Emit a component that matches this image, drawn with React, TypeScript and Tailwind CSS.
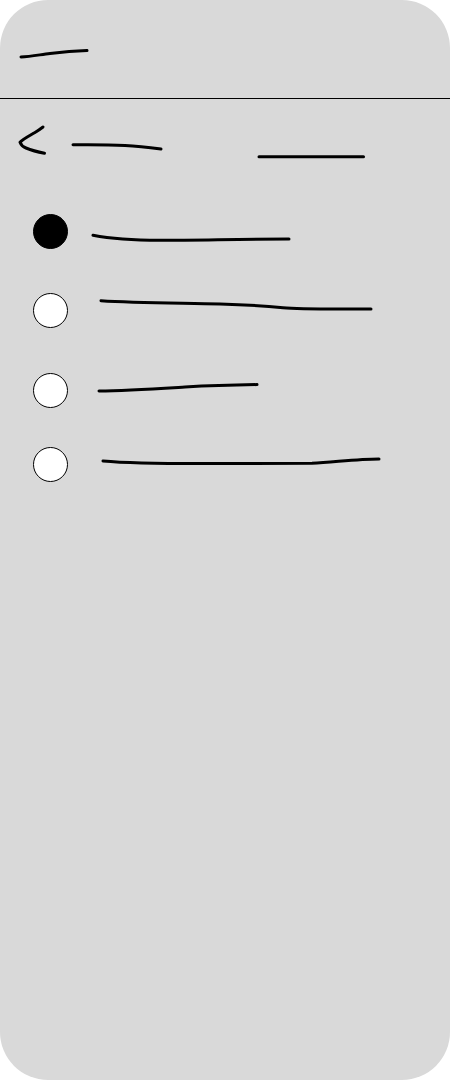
type TRadioRowProps = {
  checked?: boolean
  top: string
  viewBox: string
  line: string
}

const strokeProps = {
  fill: 'none',
  stroke: '#000',
  strokeWidth: 3,
  strokeLinecap: 'round' as const,
  strokeLinejoin: 'round' as const,
}

const RadioRow = (props: TRadioRowProps) => {
  const { checked, top, viewBox, line } = props

  return (
    <div className={`flex items-start ${top}`}>
      <div
        className={`w-[35px] h-[35px] shrink-0 rounded-full border border-black ${
          checked ? 'bg-black' : 'bg-white'
        }`}
      />
      <svg width="340" height="35" viewBox={viewBox} className="block">
        <path d={line} {...strokeProps} />
      </svg>
    </div>
  )
}

const App = () => {
  return (
    <div className="w-[450px] h-[1080px] bg-[#d9d9d9] rounded-[48px] overflow-hidden">
      <div className="h-[99px] border-b border-black">
        <svg width="100" height="98" viewBox="0 0 100 98" className="block">
          <path d="M21 57C31 56.5 41 54.5 50 53.5C63 52 75 51 87 50.5" {...strokeProps} />
        </svg>
      </div>

      <div className="flex h-[70px]">
        <svg width="450" height="70" viewBox="0 99 450 70" className="block">
          <path d="M43 127C38.5 130.5 36.5 131.5 33.5 133.3C28 136.5 23 139 20 142.3C21 145 23 146.8 26 148C32 150.5 38 152 44.5 153.3" {...strokeProps} />
          <path d="M73 144.7C95 144.5 110 144.6 125 145.4C138 146 150 147.5 161 149" {...strokeProps} />
          <path d="M259 156.8H363.5" {...strokeProps} />
        </svg>
      </div>

      <div className="pl-[33px]">
        <RadioRow
          checked
          top="mt-[45px]"
          viewBox="68 214 340 35"
          line="M93 235.3C108 238.2 125 240.3 160 240.3C200 240.3 240 239 289 239"
        />
        <RadioRow
          top="mt-[44px]"
          viewBox="68 293 340 35"
          line="M101 300.7C135 303 180 303 220 304C245 304.7 265 306 283 307.8C300 309.5 335 309 371 309"
        />
        <RadioRow
          top="mt-[45px]"
          viewBox="68 373 340 35"
          line="M99 391C125 390.5 150 389 185 387C210 385.7 235 385 257 384.6"
        />
        <RadioRow
          top="mt-[39px]"
          viewBox="68 447 340 35"
          line="M103 461C125 463 150 463.6 200 463.6C240 463.6 285 463.4 312 463.2C335 462 358 459 379 459"
        />
      </div>
    </div>
  )
}

export default App
